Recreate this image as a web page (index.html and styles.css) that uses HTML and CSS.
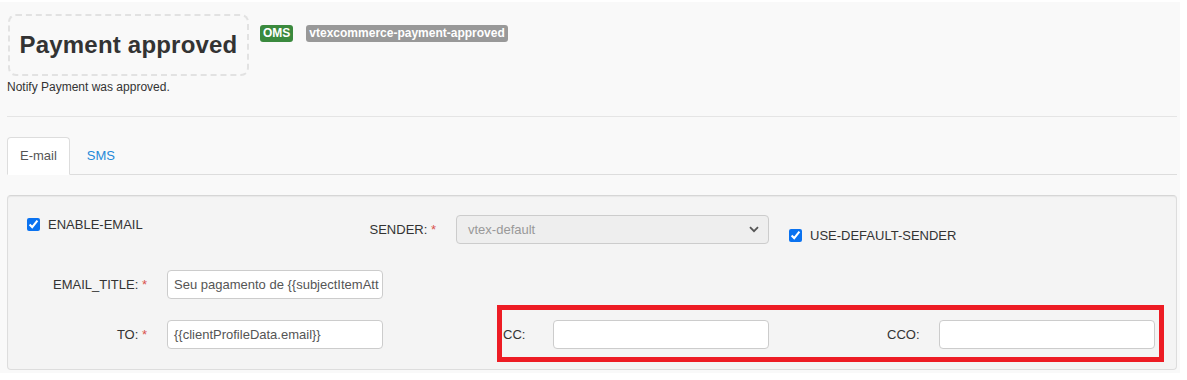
FILE: index.html
```html
<!DOCTYPE html>
<html>
<head>
<meta charset="utf-8">
<link rel="stylesheet" href="styles.css">
</head>
<body>
<div class="page">
  <div class="header">
    <div class="title-box"><h1 class="title">Payment approved</h1></div>
    <div class="badges">
      <span class="badge badge-green">OMS</span>
      <span class="badge badge-gray">vtexcommerce-payment-approved</span>
    </div>
  </div>
  <p class="desc">Notify Payment was approved.</p>
  <div class="divider"></div>
  <ul class="tabs">
    <li class="tab active">E-mail</li>
    <li class="tab">SMS</li>
  </ul>
  <div class="panel">
    <div class="row row-top">
      <label class="check check-enable"><input type="checkbox" checked><span>ENABLE-EMAIL</span></label>
      <div class="lbl lbl-sender">SENDER: <span class="req">*</span></div>
      <div class="select">
        <span>vtex-default</span>
        <svg class="chev" width="10" height="7" viewBox="0 0 10 7"><path d="M1 1.2 L5 5.2 L9 1.2" fill="none" stroke="#555" stroke-width="1.8"/></svg>
      </div>
      <label class="check check-default"><input type="checkbox" checked><span>USE-DEFAULT-SENDER</span></label>
    </div>
    <div class="row row-title">
      <div class="lbl lbl-main">EMAIL_TITLE: <span class="req">*</span></div>
      <div class="input">Seu pagamento de {{subjectItemAtt</div>
    </div>
    <div class="row row-to">
      <div class="lbl lbl-main">TO: <span class="req">*</span></div>
      <div class="input">{{clientProfileData.email}}</div>
      <div class="lbl lbl-cc">CC:</div>
      <div class="input"></div>
      <div class="lbl lbl-cco">CCO:</div>
      <div class="input"></div>
      <div class="highlight"></div>
    </div>
  </div>
</div>
</body>
</html>
```

FILE: styles.css
```css
* { box-sizing: border-box; }
html, body { margin: 0; padding: 0; background: #ffffff; }
body {
  font-family: "Liberation Sans", Arial, sans-serif;
  color: #333333;
  font-size: 13px;
}
.page {
  margin-top: 2px;
  width: 1180px;
  height: 371px;
  background: #f9f9f9;
  padding: 0 0 0 7px;
  overflow: hidden;
}
.header {
  display: flex;
  align-items: flex-start;
}
.title-box {
  margin: 12px 0 0 1px;
  width: 241px;
  height: 62px;
  border: 2px dashed #e2e2e2;
  border-radius: 8px;
  display: flex;
  align-items: center;
  justify-content: center;
}
.title {
  margin: 0;
  font-size: 24px;
  font-weight: bold;
  color: #333333;
  letter-spacing: 0.2px;
}
.badges {
  display: flex;
  gap: 13px;
  margin: 23px 0 0 11px;
}
.badge {
  display: inline-block;
  height: 17px;
  line-height: 17px;
  padding: 0 3px;
  border-radius: 3px;
  color: #ffffff;
  font-weight: bold;
  font-size: 12px;
}
.badge-green { background: #3b8a3e; }
.badge-gray { background: #999999; }
.desc {
  margin: 3px 0 0 0;
  font-size: 12px;
  line-height: 17px;
  height: 17px;
}
.divider {
  margin-top: 20px;
  width: 1170px;
  height: 1px;
  background: #e5e5e5;
}
.tabs {
  list-style: none;
  margin: 20px 0 0 0;
  padding: 0;
  width: 1170px;
  display: flex;
  border-bottom: 1px solid #dddddd;
  height: 38px;
}
.tab {
  height: 38px;
  padding: 0 12px;
  line-height: 36px;
  font-size: 13px;
  color: #2589d8;
  border: 1px solid transparent;
  border-radius: 4px 4px 0 0;
  margin-right: 4px;
}
.tab.active {
  background: #ffffff;
  color: #555555;
  border-color: #dddddd;
  border-bottom-color: #ffffff;
  margin-bottom: -1px;
  height: 38px;
}
.panel {
  margin-top: 20px;
  width: 1170px;
  height: 175px;
  background: #f4f4f4;
  border: 1px solid #dddddd;
  border-top-color: #d6d6d6;
  border-radius: 4px;
  box-shadow: inset 0 1px 1px rgba(0,0,0,0.05);
  padding: 19px 0 0 0;
}
.row {
  display: flex;
  align-items: center;
  height: 29px;
  position: relative;
}
.row-top { align-items: flex-start; }
.row-title { margin-top: 26px; }
.row-to { margin-top: 21px; }
.check {
  display: flex;
  align-items: center;
  font-size: 13px;
  color: #333333;
}
.check input {
  margin: 0;
  width: 13px;
  height: 13px;
  accent-color: #0a72f0;
}
.check span { margin-left: 8px; }
.check-enable {
  width: 240px;
  padding-left: 19px;
  margin-top: 2px;
  height: 15px;
}
.lbl {
  text-align: right;
  font-size: 13px;
  white-space: nowrap;
}
.lbl-sender {
  width: 188px;
  line-height: 29px;
}
.lbl-main { width: 139px; }
.req { color: #d9534f; }
.lbl-cc {
  width: 50px;
  margin-left: 120px;
  text-align: left;
}
.lbl-cco {
  width: 52px;
  margin-left: 118px;
  text-align: left;
}
.select {
  margin-left: 20px;
  width: 313px;
  height: 29px;
  background: #eeeeee;
  border: 1px solid #cccccc;
  border-radius: 4px;
  display: flex;
  align-items: center;
  justify-content: space-between;
  padding: 0 9px 0 11px;
  color: #999999;
  font-size: 13px;
}
.chev { display: block; }
.check-default {
  margin-left: 20px;
  margin-top: 13px;
  height: 15px;
}
.input {
  margin-left: 20px;
  width: 216px;
  height: 29px;
  background: #ffffff;
  border: 1px solid #cccccc;
  border-radius: 4px;
  padding: 0 6px;
  line-height: 27px;
  font-size: 13px;
  color: #555555;
  white-space: nowrap;
  overflow: hidden;
}
.lbl-cc + .input, .lbl-cco + .input { margin-left: 0; }
.highlight {
  position: absolute;
  left: 489px;
  top: -15px;
  width: 667px;
  height: 57px;
  border: 5px solid #ed1c24;
  pointer-events: none;
}
```
